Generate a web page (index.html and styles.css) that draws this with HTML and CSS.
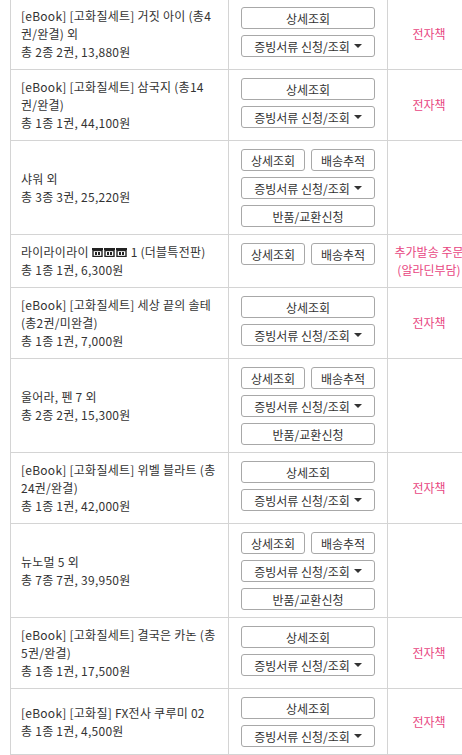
FILE: index.html
```html
<!DOCTYPE html>
<html>
<head>
    <meta charset="UTF-8">
    <title>주문 내역</title>
    <link rel="stylesheet" href="styles.css">
</head>
<body>
    <table class="order-list">
        <colgroup>
            <col class="col-item">
            <col class="col-action">
            <col class="col-note">
        </colgroup>
        <tbody>
            <!-- 1 -->
            <tr>
                <td class="item">
                    <a class="title">[eBook] [고화질세트] 거짓 아이 (총4권/완결) 외</a>
                    <div class="sum">총 2종 2권, 13,880원</div>
                </td>
                <td class="action">
                    <button class="btn">상세조회</button>
                    <button class="btn">증빙서류 신청/조회 <span class="caret"></span></button>
                </td>
                <td class="note">전자책</td>
            </tr>
            <!-- 2 -->
            <tr>
                <td class="item">
                    <a class="title">[eBook] [고화질세트] 삼국지 (총14권/완결)</a>
                    <div class="sum">총 1종 1권, 44,100원</div>
                </td>
                <td class="action">
                    <button class="btn">상세조회</button>
                    <button class="btn">증빙서류 신청/조회 <span class="caret"></span></button>
                </td>
                <td class="note">전자책</td>
            </tr>
            <!-- 3 -->
            <tr>
                <td class="item">
                    <a class="title">샤워 외</a>
                    <div class="sum">총 3종 3권, 25,220원</div>
                </td>
                <td class="action">
                    <div class="pair">
                        <button class="btn">상세조회</button>
                        <button class="btn">배송추적</button>
                    </div>
                    <button class="btn">증빙서류 신청/조회 <span class="caret"></span></button>
                    <button class="btn">반품/교환신청</button>
                </td>
                <td class="note"></td>
            </tr>
            <!-- 4 -->
            <tr>
                <td class="item">
                    <a class="title">라이라이라이 <span class="emo"><svg viewBox="0 0 11 9"><rect x="0" y="0" width="11" height="2"/><rect x="1" y="2.5" width="9" height="6" fill="none" stroke="#222" stroke-width="1.4"/><rect x="3" y="4" width="2" height="3"/><rect x="6" y="4" width="2" height="3"/></svg><svg viewBox="0 0 11 9"><rect x="0" y="0" width="11" height="2"/><rect x="1" y="2.5" width="9" height="6" fill="none" stroke="#222" stroke-width="1.4"/><rect x="3" y="4" width="2" height="3"/><rect x="6" y="4" width="2" height="3"/></svg><svg viewBox="0 0 11 9"><rect x="0" y="0" width="11" height="2"/><rect x="1" y="2.5" width="9" height="6" fill="none" stroke="#222" stroke-width="1.4"/><rect x="3" y="4" width="2" height="3"/><rect x="6" y="4" width="2" height="3"/></svg></span> 1 (더블특전판)</a>
                    <div class="sum">총 1종 1권, 6,300원</div>
                </td>
                <td class="action">
                    <div class="pair">
                        <button class="btn">상세조회</button>
                        <button class="btn">배송추적</button>
                    </div>
                </td>
                <td class="note">추가발송 주문<br>(알라딘부담)</td>
            </tr>
            <!-- 5 -->
            <tr>
                <td class="item">
                    <a class="title">[eBook] [고화질세트] 세상 끝의 솔테 (총2권/미완결)</a>
                    <div class="sum">총 1종 1권, 7,000원</div>
                </td>
                <td class="action">
                    <button class="btn">상세조회</button>
                    <button class="btn">증빙서류 신청/조회 <span class="caret"></span></button>
                </td>
                <td class="note">전자책</td>
            </tr>
            <!-- 6 -->
            <tr>
                <td class="item">
                    <a class="title">울어라, 펜 7 외</a>
                    <div class="sum">총 2종 2권, 15,300원</div>
                </td>
                <td class="action">
                    <div class="pair">
                        <button class="btn">상세조회</button>
                        <button class="btn">배송추적</button>
                    </div>
                    <button class="btn">증빙서류 신청/조회 <span class="caret"></span></button>
                    <button class="btn">반품/교환신청</button>
                </td>
                <td class="note"></td>
            </tr>
            <!-- 7 -->
            <tr>
                <td class="item">
                    <a class="title">[eBook] [고화질세트] 위벨 블라트 (총24권/완결)</a>
                    <div class="sum">총 1종 1권, 42,000원</div>
                </td>
                <td class="action">
                    <button class="btn">상세조회</button>
                    <button class="btn">증빙서류 신청/조회 <span class="caret"></span></button>
                </td>
                <td class="note">전자책</td>
            </tr>
            <!-- 8 -->
            <tr>
                <td class="item">
                    <a class="title">뉴노멀 5 외</a>
                    <div class="sum">총 7종 7권, 39,950원</div>
                </td>
                <td class="action">
                    <div class="pair">
                        <button class="btn">상세조회</button>
                        <button class="btn">배송추적</button>
                    </div>
                    <button class="btn">증빙서류 신청/조회 <span class="caret"></span></button>
                    <button class="btn">반품/교환신청</button>
                </td>
                <td class="note"></td>
            </tr>
            <!-- 9 -->
            <tr>
                <td class="item">
                    <a class="title">[eBook] [고화질세트] 결국은 카논 (총5권/완결)</a>
                    <div class="sum">총 1종 1권, 17,500원</div>
                </td>
                <td class="action">
                    <button class="btn">상세조회</button>
                    <button class="btn">증빙서류 신청/조회 <span class="caret"></span></button>
                </td>
                <td class="note">전자책</td>
            </tr>
            <!-- 10 -->
            <tr>
                <td class="item">
                    <a class="title">[eBook] [고화질] FX전사 쿠루미 02</a>
                    <div class="sum">총 1종 1권, 4,500원</div>
                </td>
                <td class="action">
                    <button class="btn">상세조회</button>
                    <button class="btn">증빙서류 신청/조회 <span class="caret"></span></button>
                </td>
                <td class="note">전자책</td>
            </tr>
        </tbody>
    </table>
</body>
</html>
```

FILE: styles.css
```css
body {
    margin: 0;
    overflow: hidden;
    background: #fff;
    font-family: "Noto Sans CJK KR", "Noto Sans", sans-serif;
    font-size: 12px;
    color: #333;
}
.order-list {
    margin: -2px 0 0 10px;
    border-collapse: collapse;
    table-layout: fixed;
    width: 460px;
}
.col-item { width: 218px; }
.col-action { width: 159px; }
.col-note { width: 83px; }
.order-list td {
    border: 1px solid #d4d4d4;
    line-height: 18px;
}
.item {
    padding: 8px 10px;
    vertical-align: middle;
    letter-spacing: 0.25px;
}
.title {
    color: #333;
    text-decoration: none;
}
.emo svg {
    width: 11px;
    height: 9px;
    margin-right: 1px;
    fill: #222;
}
.action {
    padding: 8px 12px 7px;
    vertical-align: top;
}
.action .btn,
.action .pair {
    display: flex;
    width: 134px;
}
.action > * + * {
    margin-top: 6px;
}
.pair {
    gap: 6px;
}
.pair .btn {
    flex: 1;
}
.btn {
    height: 22px;
    padding: 0;
    align-items: center;
    justify-content: center;
    gap: 4px;
    background: #fff;
    border: 1px solid #a8a8a8;
    border-radius: 3px;
    font-family: inherit;
    font-size: 12px;
    color: #333;
    cursor: pointer;
}
.caret {
    width: 0;
    height: 0;
    border-left: 4px solid transparent;
    border-right: 4px solid transparent;
    border-top: 4px solid #333;
}
.note {
    padding: 8px 4px;
    text-align: center;
    vertical-align: middle;
    color: #e8467f;
    white-space: nowrap;
}
```
